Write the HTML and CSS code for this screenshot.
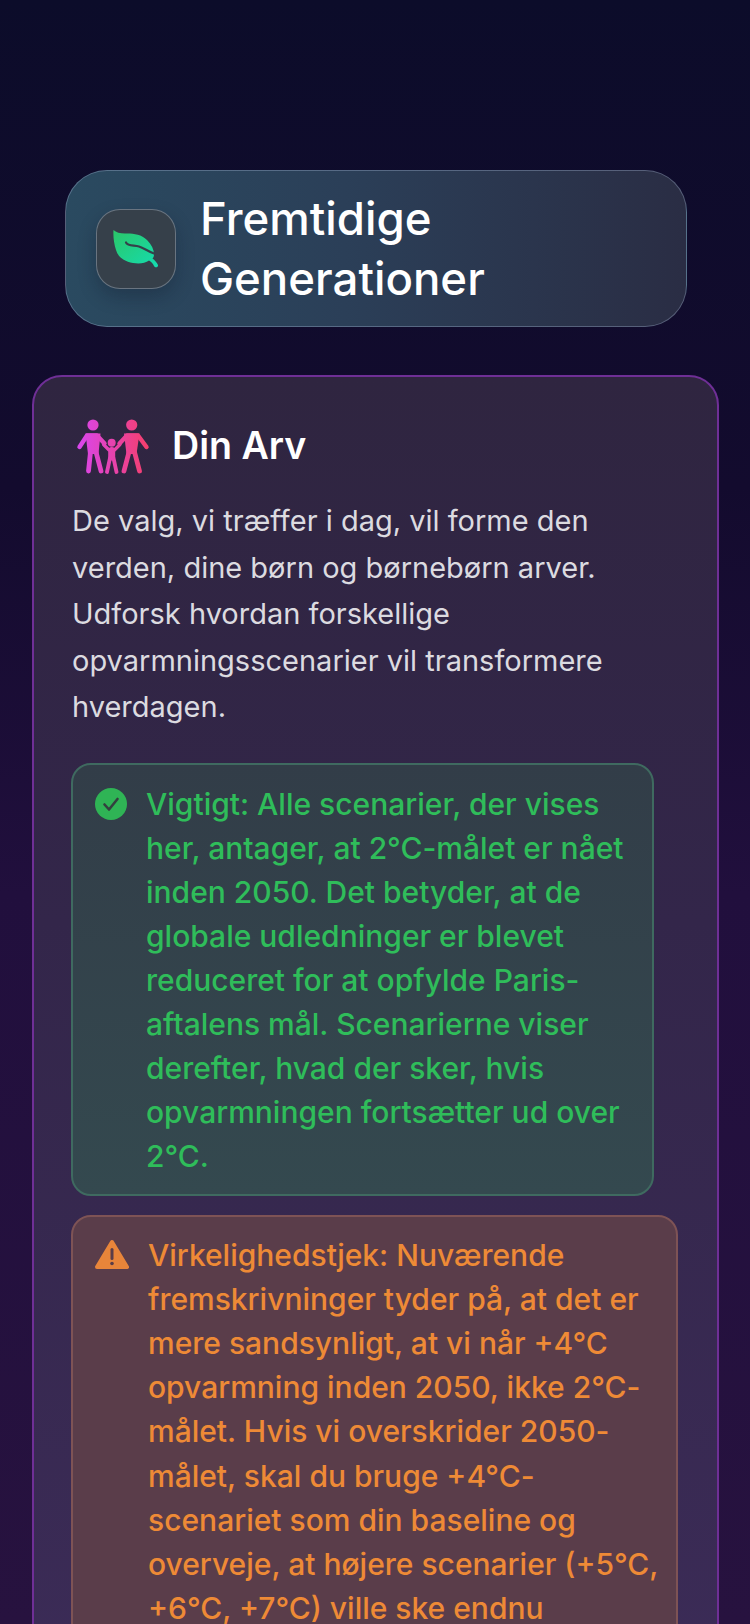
FILE: index.html
```html
<!DOCTYPE html>
<html lang="da">
<head>
  <meta charset="UTF-8">
  <meta name="viewport" content="width=device-width, initial-scale=1.0">
  <title>Fremtidige Generationer</title>
  <link rel="stylesheet" href="styles.css">
</head>
<body>
  <div class="page">
    <header class="hero">
      <div class="hero-icon">
        <svg class="leaf" viewBox="0 0 46 38" width="46" height="38">
          <defs>
            <linearGradient id="leafGrad" x1="0" y1="0" x2="1" y2="1">
              <stop offset="0" stop-color="#2bc768"/>
              <stop offset="1" stop-color="#14dcb0"/>
            </linearGradient>
          </defs>
          <path fill="url(#leafGrad)" d="M0.500 0C3 2.500 7 3.500 12 3.500C20 3.300 28 4 34 10C38.500 14.500 41 19.500 41 24.500C41 26 40.500 27.500 39.500 28.500C41.500 30 44 32.500 45 35C45.500 37.500 42 38 41 36C40 33.500 38 31.500 36 30.500C32 33.500 26 33.800 20 33C11 31.500 5 27 3 20C1 13.500 0 7 0.500 0Z"/>
          <path fill="none" stroke="#36404a" stroke-width="2.200" stroke-linecap="round" d="M13 12.500C15 16.500 21 15 26 16.500C31 18 35 21.500 41 23.500"/>
        </svg>
      </div>
      <h1 class="hero-title">Fremtidige Generationer</h1>
    </header>

    <section class="card">
      <div class="card-head">
        <svg class="family" viewBox="7 6 74 57" width="74" height="57">
          <defs>
            <linearGradient id="famGrad" gradientUnits="userSpaceOnUse" x1="8" y1="0" x2="78" y2="0">
              <stop offset="0" stop-color="#d946ef"/>
              <stop offset="1" stop-color="#f43f6e"/>
            </linearGradient>
          </defs>
          <g fill="url(#famGrad)">
            <circle cx="24" cy="14" r="5.600"/>
            <circle cx="62.700" cy="14" r="5.600"/>
            <circle cx="42.700" cy="31.700" r="4"/>
            <path d="M16.500 22.500H31.500L29.500 43H19Z"/>
            <path d="M55 22.500H70.500L67.500 43H57.500Z"/>
          </g>
          <g fill="none" stroke="url(#famGrad)" stroke-linecap="round" stroke-linejoin="round">
            <path stroke-width="4.400" d="M10.500 36L18 24.500H28L35.500 32.500"/>
            <path stroke-width="4.400" d="M77.500 36L69 24.500H58L50.500 32.500"/>
            <path stroke-width="4.800" d="M21.500 41L19.500 60M27 41L32 60"/>
            <path stroke-width="4.800" d="M60 41L55 60M65.500 41L70.500 60"/>
            <path stroke-width="3.200" d="M34.500 33.500L40 39H45.500L51 33.500"/>
            <path stroke-width="7" d="M42.700 39.500V46"/>
            <path stroke-width="3.800" d="M41 47L38 61M44.500 47L47.500 61"/>
          </g>
        </svg>
        <h2 class="card-title">Din Arv</h2>
      </div>
      <p class="intro">De valg, vi træffer i dag, vil forme den verden, dine børn og børnebørn arver. Udforsk hvordan forskellige opvarmningsscenarier vil transformere hverdagen.</p>

      <div class="note note-green">
        <svg class="note-icon" viewBox="0 0 32 32" width="32" height="32">
          <circle cx="16" cy="16" r="16" fill="#2fb455"/>
          <path d="M9.500 16.500L14 21.500L22.500 11" fill="none" stroke="#33403f" stroke-width="2.600" stroke-linecap="round" stroke-linejoin="round"/>
        </svg>
        <p>Vigtigt: Alle scenarier, der vises her, antager, at 2°C-målet er nået inden 2050. Det betyder, at de globale udledninger er blevet reduceret for at opfylde Paris-aftalens mål. Scenarierne viser derefter, hvad der sker, hvis opvarmningen fortsætter ud over 2°C.</p>
      </div>

      <div class="note note-orange">
        <svg class="note-icon" viewBox="0 0 34 32" width="34" height="32">
          <path d="M17 3L32 28H2Z" fill="#e8853a" stroke="#e8853a" stroke-width="4" stroke-linejoin="round"/>
          <path d="M17 10.500V19.500" stroke="#5a3d48" stroke-width="3" stroke-linecap="round"/>
          <circle cx="17" cy="24.500" r="1.800" fill="#5a3d48"/>
        </svg>
        <p>Virkelighedstjek: Nuværende fremskrivninger tyder på, at det er mere sandsynligt, at vi når +4°C opvarmning inden 2050, ikke 2°C-målet. Hvis vi overskrider 2050-målet, skal du bruge +4°C-scenariet som din baseline og overveje, at højere scenarier (+5°C, +6°C, +7°C) ville ske endnu hurtigere.</p>
      </div>
    </section>
  </div>
</body>
</html>
```

FILE: styles.css
```css
* {
  margin: 0;
  padding: 0;
  box-sizing: border-box;
}

html, body {
  width: 750px;
  height: 1624px;
  overflow: hidden;
  background: #0a0a25;
  font-family: "Inter", "Liberation Sans", sans-serif;
}

.page {
  height: 1624px;
  overflow: hidden;
  padding: 170px 32px 0;
  background: linear-gradient(180deg, #0c0c2a 0%, #130b2e 30%, #210f3d 55%, #27123f 100%);
}

.hero {
  display: flex;
  align-items: center;
  gap: 24px;
  width: 622px;
  height: 157px;
  margin-left: 33px;
  padding-left: 30px;
  border: 1px solid rgba(180, 200, 230, 0.32);
  border-radius: 42px;
  background: linear-gradient(90deg, #2a4a60 0%, #2b3f58 45%, #2a2d44 100%);
}

.hero-icon {
  flex: none;
  display: flex;
  align-items: center;
  justify-content: center;
  width: 80px;
  height: 80px;
  border: 1px solid rgba(200, 215, 230, 0.35);
  border-radius: 24px;
  background: #36404a;
  box-shadow: 0 8px 18px rgba(10, 15, 30, 0.25);
}

.hero-title {
  width: 400px;
  font-size: 45.600px;
  line-height: 60px;
  font-weight: 500;
  color: #fff;
}

.card {
  width: 687px;
  margin-top: 48px;
  padding: 40px 40px 40px 37px;
  border: 2px solid #6f2f96;
  border-radius: 30px;
  background: linear-gradient(180deg, #2f2540 0%, #33264a 40%, #3c2c58 100%);
}

.card-head {
  display: flex;
  align-items: center;
  gap: 22px;
  margin-left: 5px;
}

.card-title {
  font-size: 37.600px;
  line-height: 44px;
  font-weight: 600;
  color: #fff;
}

.intro {
  margin: 24px 0 0 1px;
  font-size: 29px;
  line-height: 46.500px;
  color: #dcdbe0;
}

.note {
  display: flex;
  align-items: flex-start;
  border-radius: 20px;
  font-size: 30px;
  line-height: 44px;
  font-weight: 500;
}

.note-icon {
  flex: none;
  margin-top: 6px;
}

.note-green {
  width: 583px;
  margin-top: 32px;
  padding: 17px 20px 16px 22px;
  gap: 19px;
  border: 2px solid #3f6a60;
  background: linear-gradient(180deg, #323d48 0%, #34494f 100%);
  color: #2fbd5a;
}

.note-orange {
  width: 607px;
  margin-top: 19px;
  padding: 16px 14px 24px 22px;
  gap: 19px;
  border: 2px solid #7e5355;
  background: #5a3d4a;
  line-height: 44.200px;
  color: #ee8a36;
}
```
